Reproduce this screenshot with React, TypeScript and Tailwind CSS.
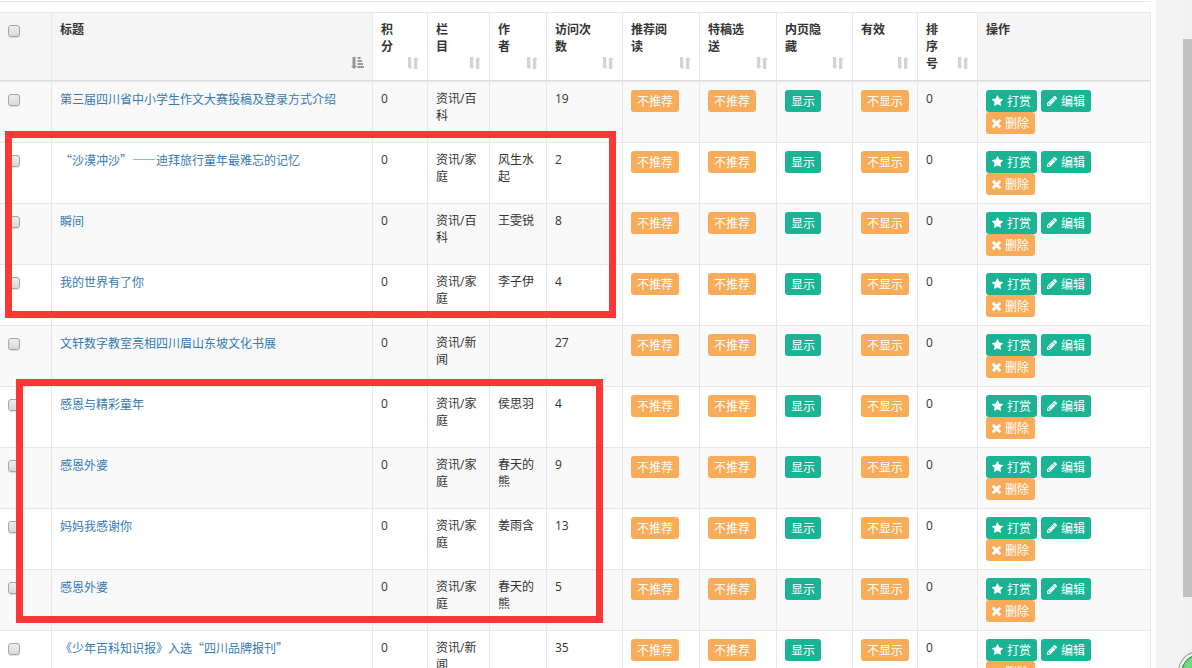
import type { ReactNode } from "react";

type Article = {
  title: string;
  category: string;
  author: string;
  visits: number;
};

const articles: Article[] = [
  { title: "第三届四川省中小学生作文大赛投稿及登录方式介绍", category: "资讯/百科", author: "", visits: 19 },
  { title: "“沙漠冲沙”——迪拜旅行童年最难忘的记忆", category: "资讯/家庭", author: "风生水起", visits: 2 },
  { title: "瞬间", category: "资讯/百科", author: "王雯锐", visits: 8 },
  { title: "我的世界有了你", category: "资讯/家庭", author: "李子伊", visits: 4 },
  { title: "文轩数字教室亮相四川眉山东坡文化书展", category: "资讯/新闻", author: "", visits: 27 },
  { title: "感恩与精彩童年", category: "资讯/家庭", author: "侯思羽", visits: 4 },
  { title: "感恩外婆", category: "资讯/家庭", author: "春天的熊", visits: 9 },
  { title: "妈妈我感谢你", category: "资讯/家庭", author: "姜雨含", visits: 13 },
  { title: "感恩外婆", category: "资讯/家庭", author: "春天的熊", visits: 5 },
  { title: "《少年百科知识报》入选“四川品牌报刊”", category: "资讯/新闻", author: "", visits: 35 },
];

const sortable = ["积分", "栏目", "作者", "访问次数", "推荐阅读", "特稿选送", "内页隐藏", "有效", "排序号"];

const STAR =
  "M1728 647q0 22-26 48l-363 354 86 500q1 7 1 20 0 21-10.5 35.5t-30.5 14.5q-19 0-40-12l-449-236-449 236q-22 12-40 12-21 0-31.5-14.5t-10.5-35.5q0-6 2-20l86-500-364-354q-25-27-25-48 0-37 56-46l502-73 225-455q19-41 49-41t49 41l225 455 502 73q56 9 56 46z";
const PENCIL =
  "M491 1536l91-91-235-235-91 91v107h128v128h107zm523-928q0-22-22-22-10 0-17 7l-542 542q-7 7-7 17 0 22 22 22 10 0 17-7l542-542q7-7 7-17zm-54-192l416 416-832 832h-416v-416zm683 96q0 53-37 90l-166 166-416-416 166-165q36-38 90-38 53 0 91 38l235 234q37 39 37 91z";
const TIMES =
  "M1490 1322q0 40-28 68l-136 136q-28 28-68 28t-68-28l-294-294-294 294q-28 28-68 28t-68-28l-136-136q-28-28-28-68t28-68l294-294-294-294q-28-28-28-68t28-68l136-136q28-28 68-28t68 28l294 294 294-294q28-28 68-28t68 28l136 136q28 28 28 68t-28 68l-294 294 294 294q28 28 28 68z";

function SortBoth() {
  return (
    <svg viewBox="0 0 12 12" className="mb-[3px] size-3 shrink-0 fill-[#d3d3d3]" aria-hidden="true">
      <path d="M1 0h3.3v9h1.4L2.9 12 0 9h1zM7 12h3.3V3H12L8.8 0 6 3h1z" />
    </svg>
  );
}

function SortDescending() {
  return (
    <svg viewBox="0 0 13 12" className="mb-[3px] h-3 w-[13px] shrink-0 fill-[#969696]" aria-hidden="true">
      <path d="M1.5 0h3v9H6l-3 3-3-3h1.5zM6.5 0h3v2h-3zM6.5 3H11v2H6.500zM6.500 6H12v2H6.500zM6.500 9H13v2H6.500z" />
    </svg>
  );
}

function Check({ label }: { label: string }) {
  return (
    <input
      type="checkbox"
      aria-label={label}
      className="mt-1 block size-3 appearance-none rounded-[3px] border border-[#a6a6a6] bg-gradient-to-b from-[#eeeeee] to-[#d9d9d9] shadow-[0_1px_1px_rgba(0,0,0,0.12)] checked:bg-[#1ab394]"
    />
  );
}

function Chip({ tone, children }: { tone: "green" | "orange"; children: ReactNode }) {
  return (
    <button
      type="button"
      className={
        tone === "green"
          ? "flex h-[22px] items-center rounded-[3px] bg-[#1ab394] px-1.5 whitespace-nowrap text-white"
          : "flex h-[22px] items-center rounded-[3px] bg-[#f8ac59] px-1.5 whitespace-nowrap text-white"
      }
    >
      {children}
    </button>
  );
}

const cell = "border-r border-b border-[#e7e7e7] p-2 align-top";
const head = "border-t border-r border-b border-[#e7e7e7] border-b-[#dddddd] p-2 text-left align-top font-semibold";

function Row({ article }: { article: Article }) {
  return (
    <tr className="odd:bg-[#f9f9f9] first:[&>td]:border-t">
      <td className={cell}>
        <Check label={article.title} />
      </td>
      <td className={`${cell} font-['Noto_Sans_CJK_SC',sans-serif]`}>
        <a href="#" lang="zh-CN" className="block text-[#337ab7] [font-kerning:none] [font-variant-ligatures:none]">
          {article.title}
        </a>
      </td>
      <td className={cell}>0</td>
      <td className={cell}>{article.category}</td>
      <td className={cell}>{article.author}</td>
      <td className={cell}>{article.visits}</td>
      <td className={cell}>
        <Chip tone="orange">不推荐</Chip>
      </td>
      <td className={cell}>
        <Chip tone="orange">不推荐</Chip>
      </td>
      <td className={cell}>
        <Chip tone="green">显示</Chip>
      </td>
      <td className={cell}>
        <Chip tone="orange">不显示</Chip>
      </td>
      <td className={cell}>0</td>
      <td className={cell}>
        <div className="flex flex-wrap gap-x-1">
          <Chip tone="green">
            <svg viewBox="64 64 1664 1664" className="mr-1 h-3 w-[11px] fill-current" aria-hidden="true">
              <path d={STAR} />
            </svg>
            打赏
          </Chip>
          <Chip tone="green">
            <svg viewBox="128 150 1515 1514" className="mr-1 size-[10px] fill-current" aria-hidden="true">
              <path d={PENCIL} />
            </svg>
            编辑
          </Chip>
          <Chip tone="orange">
            <svg viewBox="302 366 1188 1188" className="mr-1 size-[9px] fill-current" aria-hidden="true">
              <path d={TIMES} />
            </svg>
            删除
          </Chip>
        </div>
      </td>
    </tr>
  );
}

export default function App() {
  return (
    <div className="relative flex h-screen overflow-hidden bg-[#f3f3f4] font-['Open_Sans','Noto_Sans_CJK_SC',sans-serif] text-[12px] leading-[17px] text-[#333333]">
      <main className="min-w-0 flex-1 bg-white pt-px pr-[5px]">
        <div className="mb-2.5 h-px bg-[#e7e7e7]" />
        <table className="w-full table-fixed border-separate border-spacing-0">
          <colgroup>
            <col className="w-[52px]" />
            <col />
            <col className="w-[55px]" />
            <col className="w-[62px]" />
            <col className="w-[57px]" />
            <col className="w-[76px]" />
            <col className="w-[77px]" />
            <col className="w-[77px]" />
            <col className="w-[76px]" />
            <col className="w-[65px]" />
            <col className="w-[60px]" />
            <col className="w-[173px]" />
          </colgroup>
          <thead>
            <tr>
              <th className={`${head} bg-[#f5f5f6]`}>
                <Check label="全选" />
              </th>
              <th className={`${head} bg-[#f5f5f6]`}>
                <button type="button" className="flex h-[51px] w-full items-end justify-between text-left">
                  <span className="self-start">标题</span>
                  <SortDescending />
                </button>
              </th>
              {sortable.map((name) => (
                <th key={name} className={head}>
                  <button type="button" className="flex h-[51px] w-full items-end justify-between gap-2.5 text-left">
                    <span className="min-w-0 self-start">{name}</span>
                    <SortBoth />
                  </button>
                </th>
              ))}
              <th className={`${head} bg-[#f5f5f6]`}>操作</th>
            </tr>
          </thead>
          <tbody>
            {articles.map((article, i) => (
              <Row key={i} article={article} />
            ))}
          </tbody>
        </table>
      </main>

      <div className="w-[27px] shrink-0" />
      <div className="w-[9px] shrink-0 bg-[#f1f1f1] pt-[39px]">
        <div className="h-[558px] bg-[#c1c1c1]" />
      </div>

      <div className="pointer-events-none absolute top-[131px] left-[5px] h-[187px] w-[611px] border-[7px] border-[#fd3636]" />
      <div className="pointer-events-none absolute top-[379px] left-4 h-[244px] w-[587px] border-[7px] border-[#fd3636]" />

      <svg viewBox="0 0 14 16" className="absolute right-0 bottom-0 h-4 w-3.5" aria-hidden="true">
        <circle cx="21" cy="20" r="21" fill="#8d8d8d" />
        <circle cx="21" cy="20" r="20" fill="#f4f4f4" />
        <circle cx="21" cy="20" r="17.5" fill="#1d8a3a" />
        <circle cx="21" cy="20" r="16.5" fill="#6edc7c" />
      </svg>
    </div>
  );
}
